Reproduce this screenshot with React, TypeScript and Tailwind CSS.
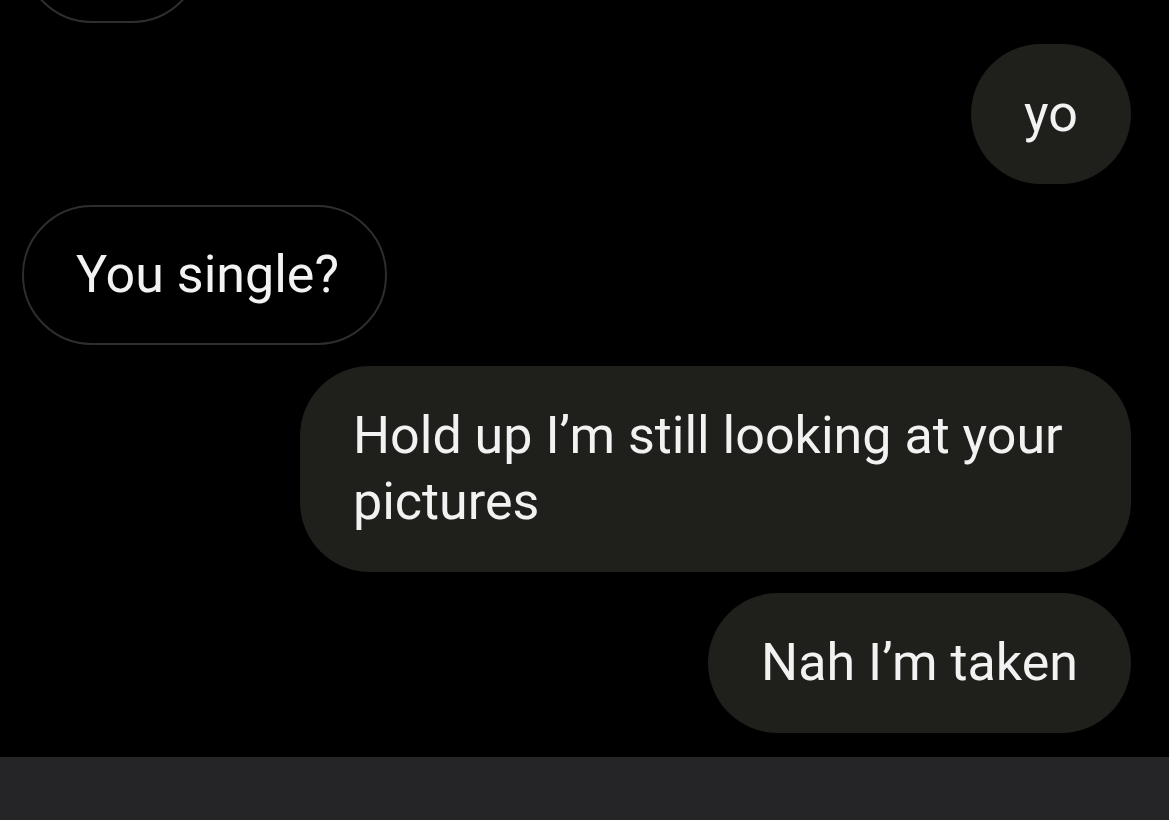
const messages = [
  { text: "", mine: false, ghost: true },
  { text: "yo", mine: true },
  { text: "You single?", mine: false },
  { text: "Hold up I\u2019m still looking at your pictures", mine: true },
  { text: "Nah I\u2019m taken", mine: true },
];

export default function App() {
  return (
    <div className="flex h-[820px] w-full flex-col overflow-hidden bg-black font-['Roboto',sans-serif] text-[#f2f2f2]">
      <div className="flex flex-1 flex-col gap-[21px] overflow-hidden pl-[22px] pr-[38px]">
        {messages.map((m, i) =>
          m.ghost ? (
            <div
              key={i}
              className="-mt-[117px] h-[140px] w-[180px] shrink-0 rounded-full border-2 border-[#2e2e2e]"
            />
          ) : (
            <div key={i} className={m.mine ? "flex justify-end" : "flex justify-start"}>
              <div
                className={
                  m.mine
                    ? "max-w-[831px] rounded-[70px] bg-[#1f1f1b] px-[53px] py-[37px] text-[52px] leading-[66px]"
                    : "max-w-[831px] rounded-[70px] border-2 border-[#2e2e2e] pl-[52px] pr-[46px] py-[35px] text-[52px] leading-[66px]"
                }
              >
                {m.text}
              </div>
            </div>
          )
        )}
      </div>
      <div className="h-[63px] shrink-0 bg-[#252527]" />
    </div>
  );
}
